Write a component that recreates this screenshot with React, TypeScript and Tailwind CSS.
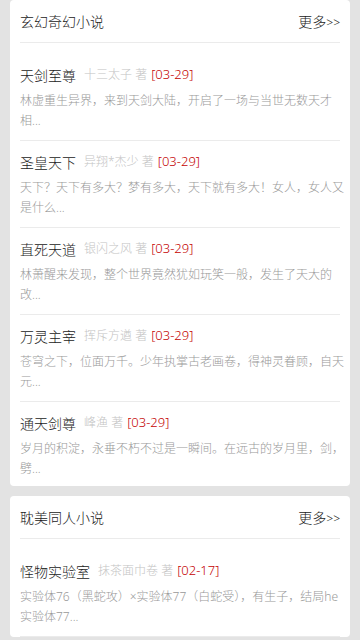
type Book = {
  title: string;
  author: string;
  date: string;
  lines: string[];
};

const sections: { name: string; books: Book[] }[] = [
  {
    name: "玄幻奇幻小说",
    books: [
      {
        title: "天剑至尊",
        author: "十三太子",
        date: "03-29",
        lines: ["林虚重生异界，来到天剑大陆，开启了一场与当世无数天才", "相..."],
      },
      {
        title: "圣皇天下",
        author: "异翔*杰少",
        date: "03-29",
        lines: ["天下？天下有多大？梦有多大，天下就有多大！女人，女人又", "是什么..."],
      },
      {
        title: "直死天道",
        author: "银闪之风",
        date: "03-29",
        lines: ["林萧醒来发现，整个世界竟然犹如玩笑一般，发生了天大的", "改..."],
      },
      {
        title: "万灵主宰",
        author: "挥斥方遒",
        date: "03-29",
        lines: ["苍穹之下，位面万千。少年执掌古老画卷，得神灵眷顾，自天", "元..."],
      },
      {
        title: "通天剑尊",
        author: "峰渔",
        date: "03-29",
        lines: ["岁月的积淀，永垂不朽不过是一瞬间。在远古的岁月里，剑，", "劈..."],
      },
    ],
  },
  {
    name: "耽美同人小说",
    books: [
      {
        title: "怪物实验室",
        author: "抹茶面巾卷",
        date: "02-17",
        lines: ["实验体76（黑蛇攻）×实验体77（白蛇受），有生子，结局he", "实验体77..."],
      },
    ],
  },
];

const font = { fontFamily: '"Noto Sans", "Noto Sans CJK SC", sans-serif' };

const BookItem = ({ book, last }: { book: Book; last: boolean }) => (
  <li className={last ? "pt-[10px] pb-[7px]" : "pt-[10px] pb-[9px] border-b border-[#ebebeb]"}>
    <div className="flex items-center h-[22px] whitespace-nowrap font-light">
      <span className="text-[14px] text-[#222]">{book.title}</span>
      <span className="ml-[8px] text-[12px] text-[#c4c4c4]">{book.author} 著</span>
      <span className="ml-[4px] text-[13px] text-[#c40000]">[{book.date}]</span>
    </div>
    <p className="mt-[5px] text-[12px] leading-[20px] text-[#999] font-light">
      {book.lines.map((line, i) => (
        <span key={i} className="block whitespace-nowrap">
          {line}
        </span>
      ))}
    </p>
  </li>
);

const App = () => {
  return (
    <div className="min-h-screen bg-[#e3e3e3] px-[10px]" style={font}>
      {sections.map((section, si) => (
        <div key={section.name} className="bg-white rounded-[4px] px-[10px] mb-[10px]">
          {/* Header */}
          <div className="flex items-center justify-between h-[43px] border-b border-[#ebebeb] font-light">
            <h2 className="text-[14px] text-[#222]">{section.name}</h2>
            <span className="text-[14px] text-[#222]">
              更多<span className="text-[12px]">&gt;&gt;</span>
            </span>
          </div>
          {/* List */}
          <ul className="pt-[11px]">
            {section.books.map((book, bi) => (
              <BookItem
                key={book.title}
                book={book}
                last={si === 0 && bi === section.books.length - 1}
              />
            ))}
          </ul>
        </div>
      ))}
    </div>
  );
};

export default App;
